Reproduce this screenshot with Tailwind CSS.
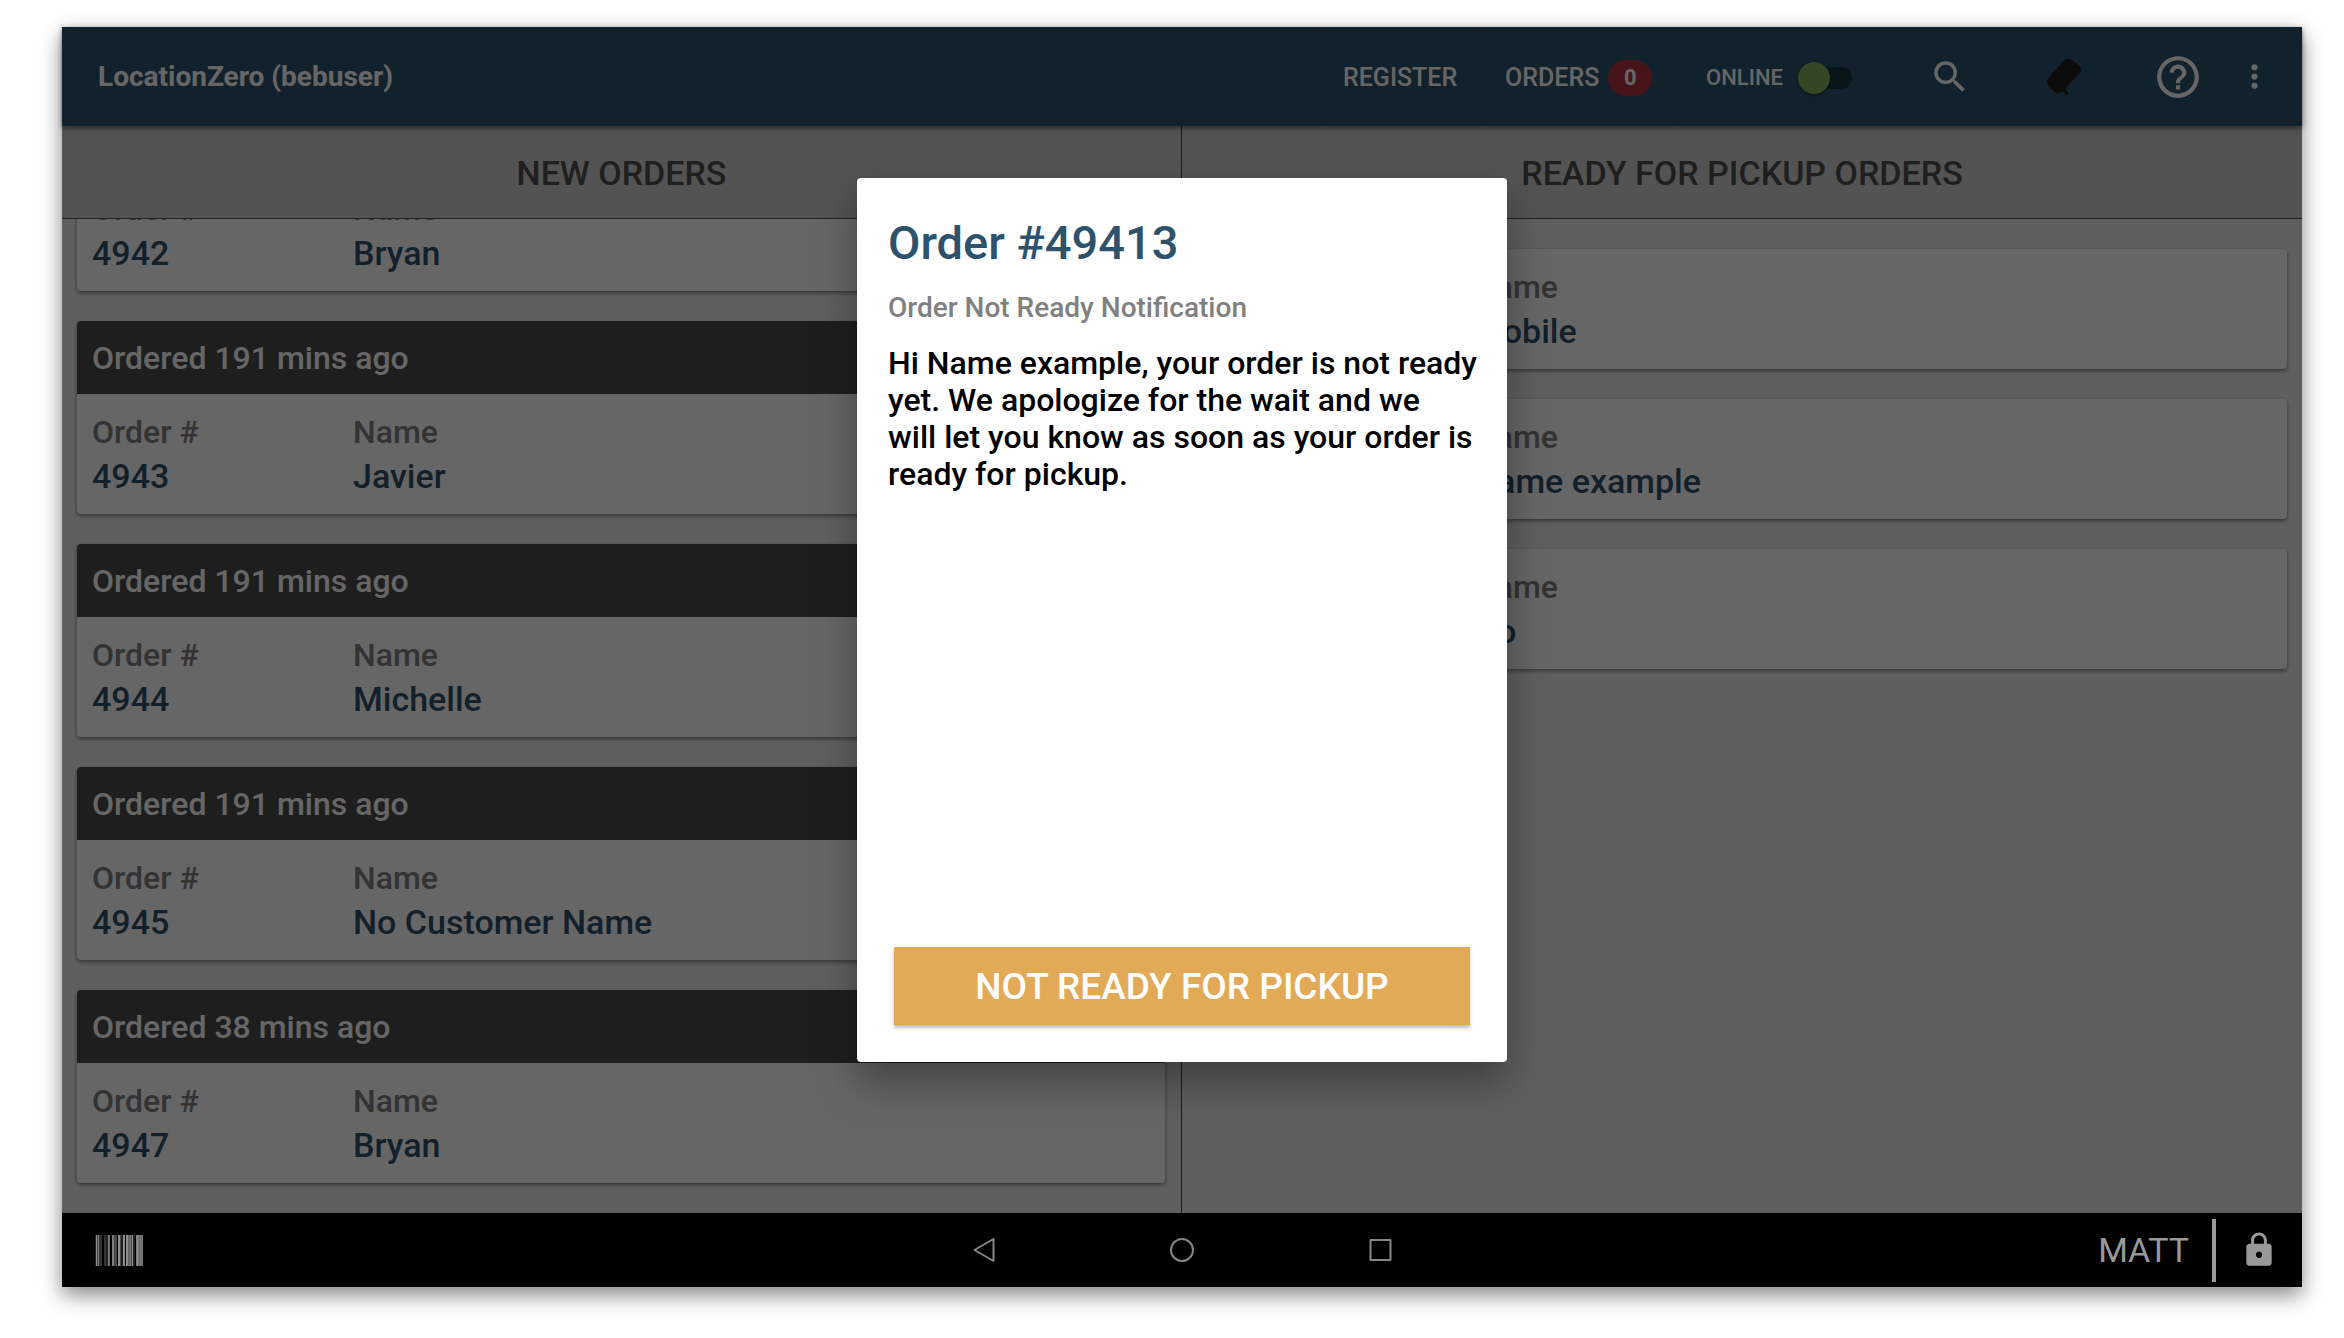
<!DOCTYPE html>
<html lang="en">
<head>
  <meta charset="UTF-8" />
  <meta name="viewport" content="width=device-width, initial-scale=1.0"/>
  <title>Orders - LocationZero</title>
  <script src="https://cdn.jsdelivr.net/npm/@tailwindcss/browser@4"></script>
</head>
<body class="flex h-screen bg-white pt-[27px] pr-[42px] pb-[51px] pl-[62px] font-['Roboto',sans-serif] font-medium">
  <div class="flex min-w-0 flex-1 flex-col shadow-[0_8px_20px_rgba(0,0,0,0.48)]">

    <div class="relative flex min-h-0 flex-1 flex-col bg-[#eeeeee]">
      <!-- Top bar -->
      <header class="z-10 flex h-[99px] shrink-0 items-center bg-[#2d556e] text-white shadow-[0_2px_5px_rgba(0,0,0,0.5)]">
        <h1 class="flex-1 pl-[36px] text-[28px] font-bold">LocationZero (bebuser)</h1>
        <nav class="flex h-full items-center text-[25px]">
          <a href="#" class="flex h-full w-[156px] items-center border-l border-[#3a4a60] pt-[2px] pl-[18px]">REGISTER</a>
          <a href="#" class="flex h-full w-[193px] items-center gap-[9px] border-l border-[#3a4a60] pt-[2px] pl-[24px]">ORDERS
            <span class="flex h-[36px] w-[44px] items-center justify-center rounded-full bg-[#b23241] text-[22px] font-bold">0</span>
          </a>
          <label class="flex h-full w-[228px] items-center gap-[15px] border-l border-[#3a4a60] pt-[2px] pl-[32px] text-[22px]">ONLINE
            <span class="relative flex h-[32px] w-[54px] items-center justify-end">
              <input type="checkbox" class="absolute inset-0 opacity-0" />
              <span class="h-[22px] w-[44px] rounded-full bg-[#1b3543]"></span>
              <span class="absolute left-0 size-[32px] rounded-full bg-[#82b058] shadow-[0_1px_3px_rgba(0,0,0,0.5)]"></span>
            </span>
          </label>
          <button type="button" aria-label="Search" class="flex w-[98px] items-center justify-center">
            <svg class="size-[42px]" viewBox="0 0 24 24" fill="currentColor"><path d="M15.5 14h-.79l-.28-.27A6.471 6.471 0 0 0 16 9.5 6.5 6.5 0 1 0 9.5 16c1.61 0 3.09-.59 4.23-1.57l.27.28v.79l5 4.99L20.49 19l-4.99-5zm-6 0C7.01 14 5 11.99 5 9.5S7.01 5 9.5 5 14 7.01 14 9.5 11.99 14 9.5 14z"/></svg>
          </button>
          <button type="button" aria-label="Scanner" class="flex h-[78px] w-[128px] items-center justify-center border-l border-[#3a4a60] text-[#1e1e1e]">
            <svg class="h-[38px] w-[36px]" viewBox="0 0 36 38" fill="currentColor"><path d="M17.500 3Q22 -1.500 27 2.500L34 8.500Q37 11.500 34 14.500L19.500 30.500L23 36L20.500 37L16 33Q12.500 37.500 8.500 34L3 28.500Q-1 24 3 19Z"/></svg>
          </button>
          <button type="button" aria-label="Help" class="flex h-[78px] w-[100px] items-center justify-center border-l border-[#3a4a60]">
            <svg class="size-[50px]" viewBox="0 0 24 24" fill="currentColor"><path d="M11 18h2v-2h-2v2zm1-16C6.480 2 2 6.480 2 12s4.480 10 10 10 10-4.480 10-10S17.520 2 12 2zm0 18c-4.410 0-8-3.590-8-8s3.590-8 8-8 8 3.590 8 8-3.590 8-8 8zm0-14c-2.210 0-4 1.790-4 4h2c0-1.100.9-2 2-2s2 .9 2 2c0 2-3 1.750-3 5h2c0-2.250 3-2.500 3-5 0-2.210-1.790-4-4-4z"/></svg>
          </button>
          <button type="button" aria-label="More options" class="mr-[21px] flex w-[54px] items-center justify-center">
            <svg class="size-[37px]" viewBox="0 0 24 24" fill="currentColor"><circle cx="12" cy="6" r="2"/><circle cx="12" cy="12" r="2"/><circle cx="12" cy="18" r="2"/></svg>
          </button>
        </nav>
      </header>

      <!-- Order columns -->
      <main class="grid min-h-0 flex-1 grid-cols-2">
        <section class="flex min-h-0 flex-col border-r border-[#444444]">
          <h2 class="flex h-[93px] shrink-0 items-center justify-center border-b border-[#555555] bg-[#cfcfcf] pt-[3px] text-[34px] text-[#4e4e4e]">NEW ORDERS</h2>
          <div id="newOrders" class="flex min-h-0 flex-1 flex-col justify-end gap-[30px] overflow-hidden pr-[16px] pb-[30px] pl-[15px]"></div>
        </section>
        <section class="flex min-h-0 flex-col">
          <h2 class="flex h-[93px] shrink-0 items-center justify-center border-b border-[#555555] bg-[#cfcfcf] pt-[3px] text-[34px] text-[#4e4e4e]">READY FOR PICKUP ORDERS</h2>
          <div id="readyOrders" class="flex min-h-0 flex-1 flex-col gap-[30px] overflow-hidden px-[15px] pt-[30px]"></div>
        </section>
      </main>

      <!-- Notification dialog -->
      <div class="absolute inset-0 z-20 flex items-center justify-center bg-black/60">
        <div role="dialog" aria-labelledby="dialogTitle" class="flex min-h-[884px] w-[650px] flex-col rounded-[4px] bg-white py-[37px] pr-[25px] pl-[31px] shadow-[0_20px_40px_rgba(0,0,0,0.35)]">
          <h2 id="dialogTitle" class="text-[47px] leading-[56px] text-[#2d526c]">Order #49413</h2>
          <p class="mt-[20px] text-[28px] leading-[34px] text-[#808080]">Order Not Ready Notification</p>
          <p class="mt-[20px] text-[32px] leading-[37px] text-black">Hi Name example, your order is not ready yet. We apologize for the wait and we<br>will let you know as soon as your order is ready for pickup.</p>
          <button type="button" class="mt-auto mr-[12px] ml-[6px] h-[78px] bg-[#e2aa57] pt-[2px] text-[37px] text-white shadow-[0_3px_3px_rgba(0,0,0,0.25)]">NOT READY FOR PICKUP</button>
        </div>
      </div>
    </div>

    <!-- System bar -->
    <footer class="grid h-[74px] shrink-0 grid-cols-3 items-center bg-black text-[#999999]">
      <div class="pl-[33px]">
        <button type="button" aria-label="Barcode" class="block">
          <svg class="h-[31px] w-[48px]" viewBox="0 0 48 31" shape-rendering="crispEdges">
            <path fill="#222222" d="M0 0h1v31h-1zM11 0h2v31h-2zM26 0h2v31h-2zM38 0h2v31h-2z"/>
            <path fill="#333333" d="M4 0h3v31h-3zM9 0h2v31h-2z"/>
            <path fill="#484848" d="M2 0h1v31h-1zM19 0h3v31h-3zM25 0h1v31h-1zM36 0h1v31h-1z"/>
            <path fill="#666666" d="M14 0h1v31h-1zM33 0h2v31h-2zM44 0h1v31h-1zM46 0h1v31h-1z"/>
            <path fill="#7b7b7b" d="M3 0h1v31h-1zM13 0h1v31h-1zM17 0h2v31h-2zM35 0h1v31h-1zM41 0h1v31h-1zM43 0h1v31h-1zM45 0h1v31h-1zM47 0h1v31h-1z"/>
            <path fill="#8e8e8e" d="M1 0h1v31h-1zM23 0h2v31h-2zM28 0h2v31h-2zM31 0h2v31h-2zM37 0h1v31h-1zM42 0h1v31h-1z"/>
          </svg>
        </button>
      </div>
      <div class="flex justify-center gap-[158px] text-[#858585]">
        <button type="button" aria-label="Back"><svg class="size-[40px]" viewBox="0 0 40 40" fill="none" stroke="currentColor" stroke-width="2" stroke-linejoin="round"><path d="M29.500 9v22L10.500 20z"/></svg></button>
        <button type="button" aria-label="Home"><svg class="size-[40px]" viewBox="0 0 40 40" fill="none" stroke="currentColor" stroke-width="2"><circle cx="20" cy="20" r="11"/></svg></button>
        <button type="button" aria-label="Recent apps"><svg class="size-[40px]" viewBox="0 0 40 40" fill="none" stroke="currentColor" stroke-width="2" stroke-linejoin="round"><path d="M10.500 10h20v20h-20z"/></svg></button>
      </div>
      <div class="flex items-center justify-end pr-[24px]">
        <span class="text-[34px] font-normal">MATT</span>
        <span class="mr-[24px] ml-[23px] h-[63px] w-[4px] bg-[#999999]"></span>
        <button type="button" aria-label="Lock">
          <svg class="size-[38px]" viewBox="0 0 24 24" fill="currentColor"><path d="M18 8h-1V6c0-2.760-2.240-5-5-5S7 3.240 7 6v2H6c-1.100 0-2 .9-2 2v10c0 1.100.9 2 2 2h12c1.100 0 2-.9 2-2V10c0-1.100-.9-2-2-2zm-6 9c-1.100 0-2-.9-2-2s.9-2 2-2 2 .9 2 2-.9 2-2 2zm3.100-9H8.900V6c0-1.710 1.390-3.100 3.100-3.100s3.100 1.390 3.100 3.100v2z"/></svg>
        </button>
      </div>
    </footer>
  </div>

  <script>
    const newOrders = [
      { ordered: 'Ordered 191 mins ago', id: '4942', name: 'Bryan' },
      { ordered: 'Ordered 191 mins ago', id: '4943', name: 'Javier' },
      { ordered: 'Ordered 191 mins ago', id: '4944', name: 'Michelle' },
      { ordered: 'Ordered 191 mins ago', id: '4945', name: 'No Customer Name' },
      { ordered: 'Ordered 38 mins ago', id: '4947', name: 'Bryan' }
    ];
    const readyOrders = [
      { id: '4940', name: 'Mobile' },
      { id: '49413', name: 'Name example' },
      { id: '4946', name: 'No' }
    ];

    const card = o => `
      <article class="shrink-0 overflow-hidden rounded-[4px] bg-white shadow-[0_2px_4px_rgba(0,0,0,0.45)]">
        ${o.ordered ? `<h3 class="flex h-[73px] items-center bg-[#4d4d4d] px-[15px] pt-[1px] text-[32px] text-white">${o.ordered}</h3>` : ''}
        <dl class="flex px-[15px] pt-[18px] pb-[13px]">
          <div class="w-[261px]">
            <dt class="text-[32px] leading-[40px] text-[#808080]">Order #</dt>
            <dd class="text-[34px] leading-[49px] text-[#2d526c]">${o.id}</dd>
          </div>
          <div>
            <dt class="text-[32px] leading-[40px] text-[#808080]">Name</dt>
            <dd class="text-[34px] leading-[49px] text-[#2d526c]">${o.name}</dd>
          </div>
        </dl>
      </article>`;

    document.getElementById('newOrders').innerHTML = newOrders.map(card).join('');
    document.getElementById('readyOrders').innerHTML = readyOrders.map(card).join('');
  </script>
</body>
</html>
